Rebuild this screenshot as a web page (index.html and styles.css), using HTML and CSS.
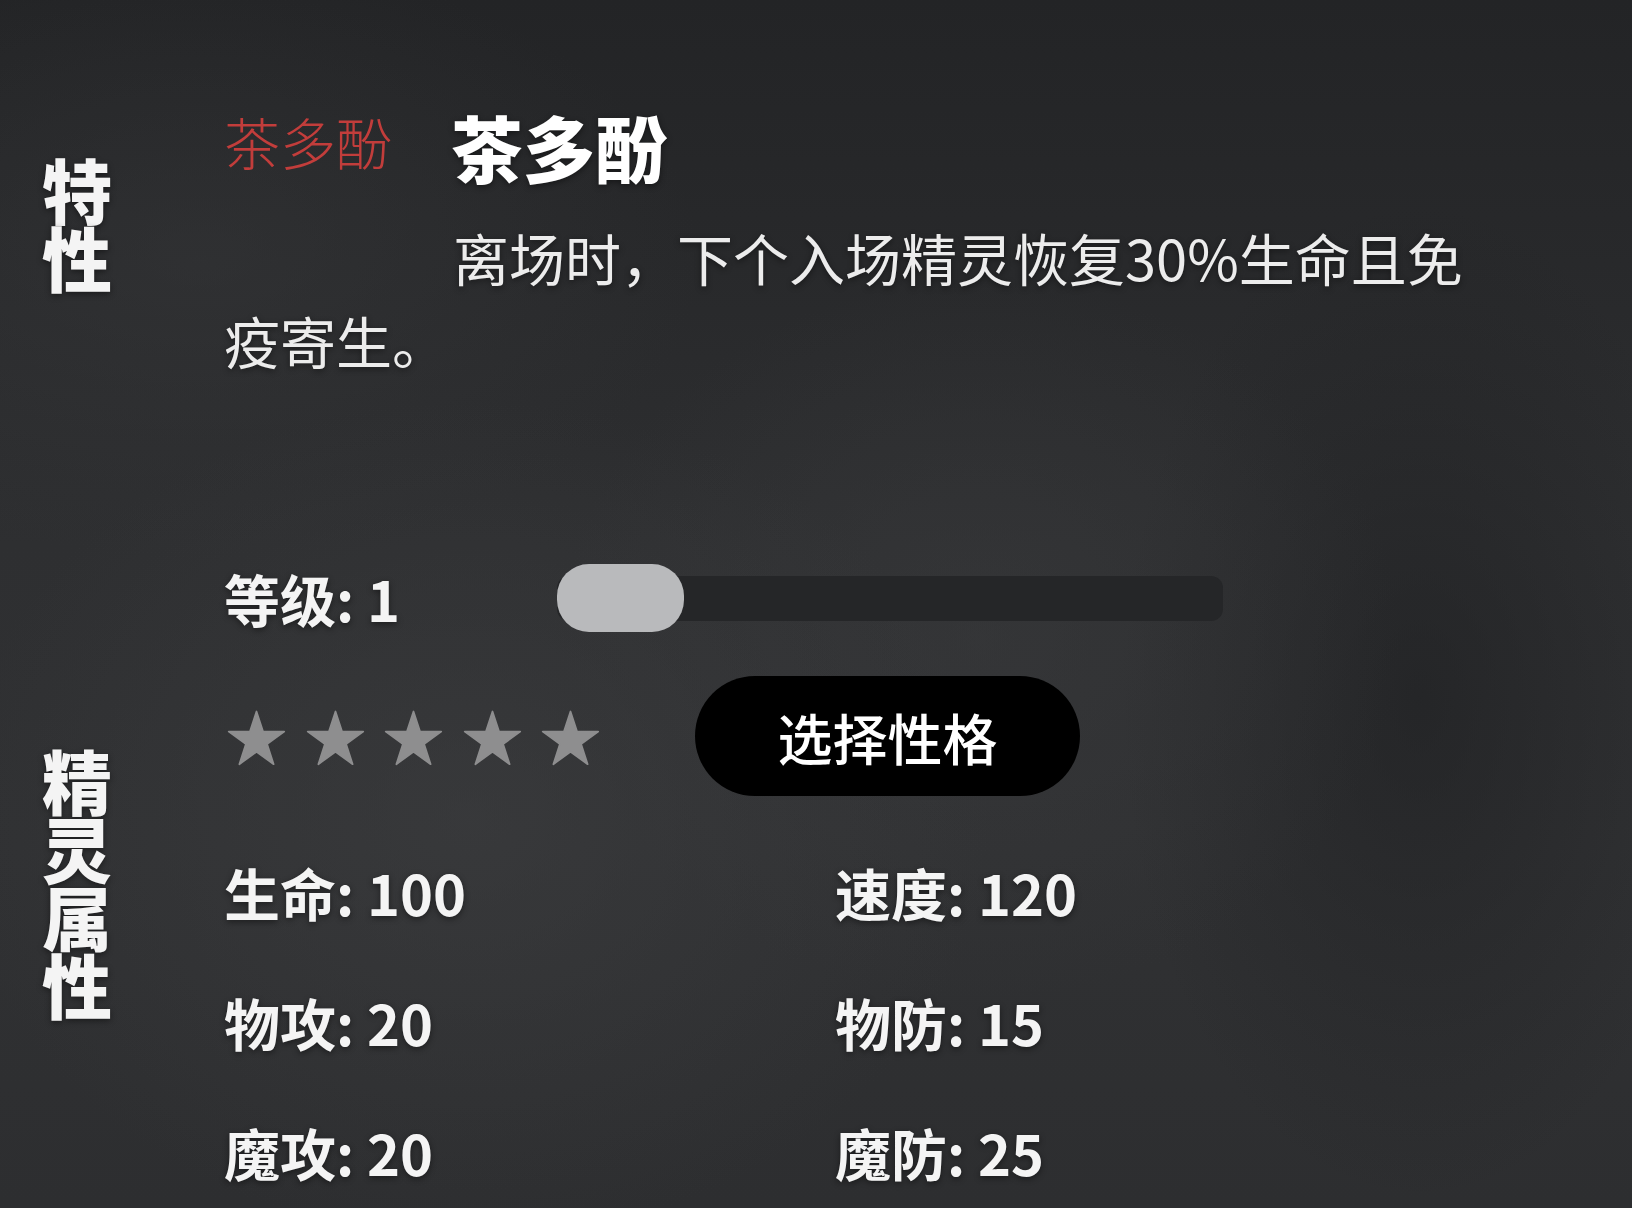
FILE: index.html
```html
<!DOCTYPE html>
<html>
	<head>
		<title>精灵详情</title>
		<meta charset="UTF-8">
		<link rel="stylesheet" href="styles.css">
	</head>
	<body>
		<div class="page">
			<section class="block">
				<h2 class="side">特性</h2>
				<div class="body">
					<div class="traitHead">
						<span class="tag">茶多酚</span>
						<span class="traitName">茶多酚</span>
					</div>
					<p class="desc">离场时，下个入场精灵恢复30%生命且免疫寄生。</p>
				</div>
			</section>

			<section class="block attrs">
				<h2 class="side">精灵属性</h2>
				<div class="body">
					<div class="levelRow">
						<span class="level">等级: 1</span>
						<div class="slider"><div class="thumb"></div></div>
					</div>
					<div class="rankRow">
						<div class="stars">
							<svg class="star" viewBox="0 0 100 96"><path d="M50 2.5 L61.23 37.05 L97.55 37.05 L68.17 58.4 L79.39 92.95 L50 71.6 L20.61 92.95 L31.83 58.4 L2.45 37.05 L38.77 37.05 Z"/></svg>
							<svg class="star" viewBox="0 0 100 96"><path d="M50 2.5 L61.23 37.05 L97.55 37.05 L68.17 58.4 L79.39 92.95 L50 71.6 L20.61 92.95 L31.83 58.4 L2.45 37.05 L38.77 37.05 Z"/></svg>
							<svg class="star" viewBox="0 0 100 96"><path d="M50 2.5 L61.23 37.05 L97.55 37.05 L68.17 58.4 L79.39 92.95 L50 71.6 L20.61 92.95 L31.83 58.4 L2.45 37.05 L38.77 37.05 Z"/></svg>
							<svg class="star" viewBox="0 0 100 96"><path d="M50 2.5 L61.23 37.05 L97.55 37.05 L68.17 58.4 L79.39 92.95 L50 71.6 L20.61 92.95 L31.83 58.4 L2.45 37.05 L38.77 37.05 Z"/></svg>
							<svg class="star" viewBox="0 0 100 96"><path d="M50 2.5 L61.23 37.05 L97.55 37.05 L68.17 58.4 L79.39 92.95 L50 71.6 L20.61 92.95 L31.83 58.4 L2.45 37.05 L38.77 37.05 Z"/></svg>
						</div>
						<button class="btnNature">选择性格</button>
					</div>
					<div class="stats">
						<div class="stat">生命: 100</div>
						<div class="stat">速度: 120</div>
						<div class="stat">物攻: 20</div>
						<div class="stat">物防: 15</div>
						<div class="stat">魔攻: 20</div>
						<div class="stat">魔防: 25</div>
					</div>
				</div>
			</section>
		</div>
	</body>
</html>
```

FILE: styles.css
```css
html, body{
	margin: 0;
	height: 100%;
}
body{
	font-family: "Noto Sans CJK SC", "Noto Sans", sans-serif;
	color: #f4f4f4;
	overflow: hidden;
	background-color: #2b2c2e;
	background-image:
		radial-gradient(ellipse 520px 420px at 470px 820px, rgba(62,63,65,0.55), transparent),
		radial-gradient(ellipse 420px 360px at 980px 640px, rgba(58,59,61,0.5), transparent),
		radial-gradient(ellipse 500px 300px at 200px 260px, rgba(56,57,59,0.45), transparent),
		radial-gradient(ellipse 300px 500px at 1420px 700px, rgba(30,31,33,0.6), transparent),
		linear-gradient(180deg, #232426 0%, #27282a 18%, #2e2f31 45%, #303133 70%, #2d2e30 100%);
}
.page{
	padding: 110px 0 0 42px;
}
.block{
	display: grid;
	grid-template-columns: 182px 1271px;
}
.attrs{
	margin-top: 183px;
}
.side{
	margin: 45px 0 0 0;
	width: 70px;
	font-size: 70px;
	line-height: 68px;
	font-weight: 900;
	align-self: start;
	text-shadow: 0 2px 6px rgba(0,0,0,0.45);
}
.attrs .side{
	margin-top: 182px;
}
.body{
	min-width: 0;
}
.traitHead{
	display: flex;
	align-items: flex-start;
}
.tag{
	margin-top: 3px;
	width: 227px;
	font-size: 56px;
	line-height: 56px;
	font-weight: 300;
	color: #c23d3b;
}
.traitName{
	font-size: 72px;
	line-height: 72px;
	font-weight: 900;
	color: #ffffff;
	text-shadow: 0 2px 6px rgba(0,0,0,0.45);
}
.desc{
	margin: 33px 0 0 0;
	font-size: 56px;
	line-height: 83px;
	text-indent: 229px;
	color: #ececec;
	text-shadow: 0 2px 6px rgba(0,0,0,0.45);
}
.levelRow{
	display: flex;
	align-items: center;
	height: 68px;
}
.level{
	width: 333px;
	font-size: 56px;
	line-height: 56px;
	font-weight: 700;
	text-shadow: 0 2px 6px rgba(0,0,0,0.45);
}
.slider{
	position: relative;
	width: 666px;
	height: 45px;
	border-radius: 12px;
	background-color: #252628;
}
.thumb{
	position: absolute;
	left: 0;
	top: -12px;
	width: 127px;
	height: 68px;
	border-radius: 32px;
	background-color: #b9babc;
}
.rankRow{
	display: flex;
	align-items: center;
	margin-top: 44px;
	height: 120px;
}
.stars{
	display: flex;
	gap: 19.5px;
	padding-left: 3px;
	padding-top: 4px;
}
.star{
	width: 59px;
	height: 56px;
	display: block;
}
.star path{
	fill: #8e8e8f;
	stroke: #8e8e8f;
	stroke-width: 3;
	stroke-linejoin: round;
}
.btnNature{
	margin-left: 95px;
	width: 385px;
	height: 120px;
	border: none;
	border-radius: 60px;
	background-color: #000000;
	color: #ffffff;
	font-family: "Noto Sans CJK SC", sans-serif;
	font-size: 55px;
	font-weight: 500;
	padding: 0;
}
.stats{
	display: grid;
	grid-template-columns: 611px 611px;
	row-gap: 74px;
	margin-top: 68px;
}
.stat{
	font-size: 56px;
	line-height: 56px;
	font-weight: 700;
	text-shadow: 0 2px 6px rgba(0,0,0,0.45);
}
```
